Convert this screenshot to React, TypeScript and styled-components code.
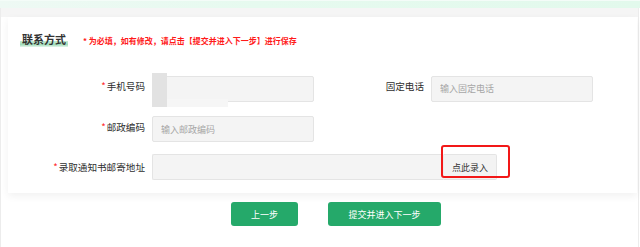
import React from "react";
import styled, { createGlobalStyle } from "styled-components";

const GlobalStyle = createGlobalStyle`
  html, body {
    margin: 0;
    padding: 0;
    background: #ffffff;
  }
  body {
    font-family: "Noto Sans CJK SC", "Noto Sans", "Liberation Sans", sans-serif;
    color: #333333;
  }
  * {
    box-sizing: border-box;
  }
`;

type FieldProps = {
  label: string;
  required?: boolean;
  placeholder?: string;
  redacted?: boolean;
};

const Field: React.FC<FieldProps> = ({ label, required, placeholder, redacted }) => (
  <>
    <Label>
      {required && <Star>*</Star>}
      {label}
    </Label>
    <InputBox>
      <Input placeholder={placeholder} readOnly={redacted} />
      {redacted && (
        <>
          <RedactDark />
          <RedactLight />
        </>
      )}
    </InputBox>
  </>
);

const App: React.FC = () => {
  return (
    <>
      <GlobalStyle />
      <TopStrip />
      <Frame>
        <GreyBand />
        <Card>
          <Header>
            <Title>联系方式</Title>
            <Note>* 为必填，如有修改，请点击【提交并进入下一步】进行保存</Note>
          </Header>
          <FormGrid>
            <Field label="手机号码" required redacted />
            <Field label="固定电话" placeholder="输入固定电话" />
            <Field label="邮政编码" required placeholder="输入邮政编码" />
            <Spacer />
            <Label>
              <Star>*</Star>
              录取通知书邮寄地址
            </Label>
            <AddressCell>
              <InputGroup>
                <Input />
                <AppendButton type="button">点此录入</AppendButton>
                <Highlight />
              </InputGroup>
            </AddressCell>
          </FormGrid>
        </Card>
        <Actions>
          <ActionButton type="button">上一步</ActionButton>
          <ActionButton type="button" wide>
            提交并进入下一步
          </ActionButton>
        </Actions>
      </Frame>
    </>
  );
};

const TopStrip = styled.div`
  height: 8px;
  border-top: 1px solid #f4fcf8;
  background: linear-gradient(to right, #eef9f4 0%, #e6faef 40%, #e2f9ec 100%);
`;

const Frame = styled.div`
  width: 639px;
  min-height: 239px;
  border-left: 1px solid #ececec;
  border-right: 1px solid #ececec;
  background: #ffffff;
`;

const GreyBand = styled.div`
  height: 9px;
  background: #f5f5f5;
`;

const Card = styled.div`
  margin: 0 1px 0 7px;
  height: 176px;
  padding: 10px 0 0 12px;
  background: #ffffff;
  box-shadow: 0 3px 8px rgba(0, 0, 0, 0.06);
`;

const Header = styled.div`
  display: flex;
  align-items: center;
  height: 22px;
`;

const Title = styled.span`
  display: inline-block;
  padding: 0 2px;
  font-size: 11px;
  font-weight: 700;
  line-height: 16px;
  color: #333333;
  background: linear-gradient(
    to bottom,
    transparent 0%,
    transparent 60%,
    #c8ecd8 60%,
    #a2ddbb 85%,
    rgba(168, 224, 192, 0.3) 100%
  );
  margin-top: 2px;
`;

const Note = styled.span`
  margin-left: 15px;
  margin-top: 4px;
  font-size: 8px;
  font-weight: 700;
  color: #ff1a1a;
  white-space: nowrap;
`;

const FormGrid = styled.div`
  display: grid;
  grid-template-columns: 125px 162px 103px 162px;
  grid-auto-rows: 26px;
  column-gap: 7px;
  row-gap: 14.5px;
  margin-top: 24px;
  margin-left: -12px;
  padding-left: 12px;
`;

const Label = styled.div`
  display: flex;
  align-items: center;
  justify-content: flex-end;
  font-size: 9.6px;
  color: #2e2e2e;
  white-space: nowrap;
`;

const Star = styled.span`
  color: #ff2b2b;
  margin-right: 1px;
`;

const InputBox = styled.div`
  position: relative;
  height: 26px;
`;

const Input = styled.input`
  width: 100%;
  height: 100%;
  padding: 0 8px;
  border: 1px solid #e4e4e4;
  border-radius: 2px;
  background: #f4f4f4;
  font-family: inherit;
  font-size: 9px;
  color: #333333;
  outline: none;

  &::placeholder {
    color: #a6a6a6;
  }
`;

const RedactDark = styled.div`
  position: absolute;
  left: 0;
  top: 0;
  width: 15px;
  height: 34px;
  background: #e2e2e2;
`;

const RedactLight = styled.div`
  position: absolute;
  left: 15px;
  top: 26px;
  width: 61px;
  height: 8px;
  background: #f6f6f6;
`;

const Spacer = styled.div`
  grid-column: span 2;
`;

const AddressCell = styled.div`
  grid-column: span 3;
`;

const InputGroup = styled.div`
  position: relative;
  display: flex;
  width: 345px;
  height: 26px;

  ${Input} {
    flex: 1;
    border-right: none;
    border-radius: 2px 0 0 2px;
  }
`;

const AppendButton = styled.button`
  width: 54px;
  height: 100%;
  padding: 0;
  border: 1px solid #e4e4e4;
  border-left: 1px solid #ededed;
  border-radius: 0 2px 2px 0;
  background: #f3f3f3;
  font-family: inherit;
  font-size: 9px;
  color: #333333;
  cursor: pointer;
`;

const Highlight = styled.div`
  position: absolute;
  left: 289px;
  top: -9px;
  width: 69px;
  height: 33px;
  border: 2px solid #f21818;
  border-radius: 3px;
  pointer-events: none;
`;

const Actions = styled.div`
  display: flex;
  justify-content: center;
  gap: 30px;
  margin-top: 9px;
  padding-left: 33px;
`;

const ActionButton = styled.button<{ wide?: boolean }>`
  width: ${({ wide }) => (wide ? "113px" : "67px")};
  height: 24px;
  border: none;
  border-radius: 3px;
  background: #25a96a;
  color: #ffffff;
  font-family: inherit;
  font-size: 9px;
  cursor: pointer;
`;

export default App;
